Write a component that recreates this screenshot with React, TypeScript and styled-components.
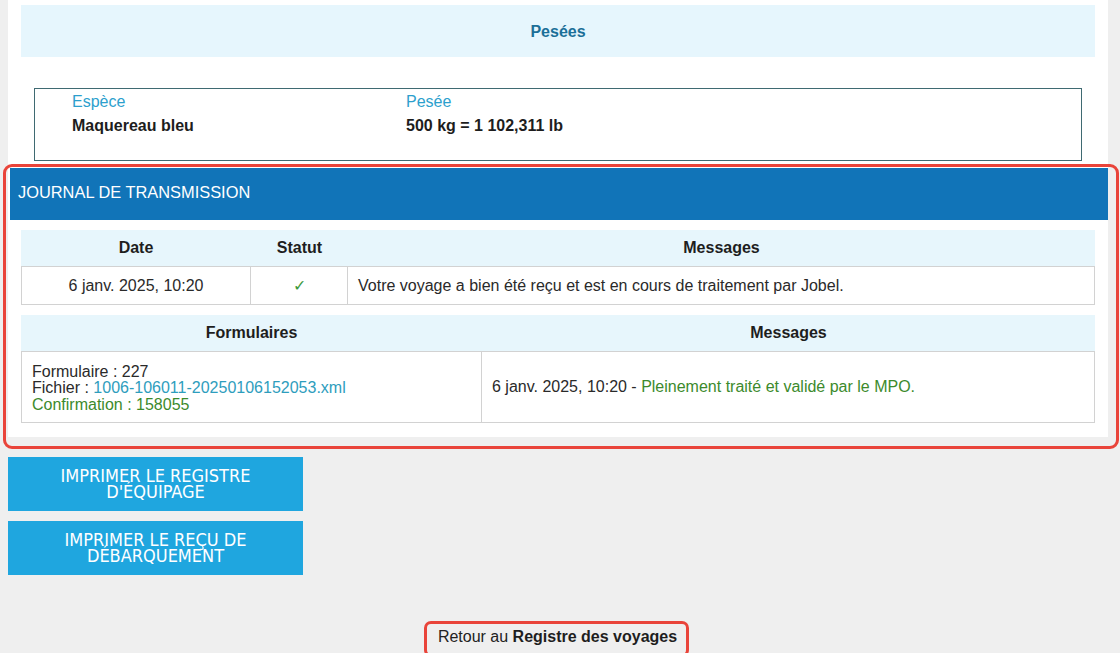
import React from 'react';
import styled, { createGlobalStyle } from 'styled-components';

const GlobalStyle = createGlobalStyle`
  html, body {
    margin: 0;
    padding: 0;
    background: #efefef;
    font-family: "Liberation Sans", Arial, sans-serif;
    color: #222;
  }
  body {
    overflow: hidden;
  }
`;

const Page = styled.div`
  width: 1120px;
  height: 653px;
  padding-left: 8px;
  box-sizing: border-box;
`;

const Card = styled.div`
  width: 1100px;
  background: #fff;
  padding-top: 5px;
`;

const SectionTitle = styled.div`
  margin: 0 13px;
  height: 52px;
  background: #e6f6fd;
  display: flex;
  align-items: center;
  justify-content: center;
  padding-top: 2px;
  box-sizing: border-box;
  font-size: 16px;
  font-weight: bold;
  color: #1b6f98;
`;

const SpeciesBox = styled.div`
  margin: 31px 26px 0 26px;
  height: 73px;
  box-sizing: border-box;
  border: 1px solid #3f6a72;
  display: grid;
  grid-template-columns: 334px 1fr;
  padding: 4px 0 0 37px;
`;

const Field = styled.div`
  display: flex;
  flex-direction: column;
`;

const FieldLabel = styled.span`
  font-size: 16px;
  color: #2c9fcd;
  line-height: 17px;
`;

const FieldValue = styled.span`
  font-size: 16px;
  font-weight: bold;
  color: #1d1d1d;
  line-height: 17px;
  margin-top: 7px;
`;

const Journal = styled.section`
  position: relative;
  margin-top: 7px;
  padding-bottom: 14px;
`;

const Highlight = styled.div<{ $radius?: number }>`
  position: absolute;
  border: 3px solid #e9443a;
  border-radius: ${p => p.$radius ?? 9}px;
  pointer-events: none;
`;

const JournalBar = styled.div`
  height: 52px;
  margin-left: 2px;
  background: #1174b8;
  color: #fff;
  font-size: 16.4px;
  display: flex;
  align-items: center;
  padding-left: 8px;
  padding-bottom: 3px;
  box-sizing: border-box;
`;

const Table = styled.div<{ $cols: string }>`
  margin: 10px 13px 0 13px;
  display: grid;
  grid-template-columns: ${p => p.$cols};
`;

const HeadCell = styled.div`
  height: 37px;
  background: #e7f6fc;
  display: flex;
  align-items: center;
  justify-content: center;
  font-size: 16px;
  font-weight: bold;
  color: #1e1e1e;
  border-bottom: 1px solid #d2d2d2;
  box-sizing: border-box;
`;

const Cell = styled.div<{ $center?: boolean; $h: number }>`
  height: ${p => p.$h}px;
  box-sizing: border-box;
  border: 1px solid #d2d2d2;
  border-top: none;
  border-left: none;
  display: flex;
  align-items: center;
  justify-content: ${p => (p.$center ? 'center' : 'flex-start')};
  padding: 0 10px;
  font-size: 16px;
  color: #2a2a2a;
`;

const FirstCell = styled(Cell)`
  border-left: 1px solid #d2d2d2;
`;

const Check = styled.span`
  color: #3d9a3d;
  font-size: 16px;
`;

const Lines = styled.div`
  display: flex;
  flex-direction: column;
  line-height: 16.5px;
  margin-top: 3px;
`;

const Link = styled.span`
  color: #2e9dbd;
`;

const Green = styled.span`
  color: #3c8a2c;
`;

const Buttons = styled.div`
  display: flex;
  flex-direction: column;
  gap: 10px;
  margin-top: 20px;
`;

const PrintButton = styled.button`
  width: 295px;
  height: 54px;
  border: none;
  background: #1fa6df;
  color: #fff;
  font-family: "Liberation Sans Narrow", "DejaVu Sans Condensed", sans-serif;
  font-size: 18px;
  line-height: 16px;
  text-transform: uppercase;
  padding: 0 40px 0 40px;
  cursor: pointer;
`;

const Footer = styled.div`
  display: flex;
  justify-content: center;
  margin-top: 46px;
  padding-right: 15px;
`;

const Back = styled.a`
  position: relative;
  font-size: 16px;
  color: #222;
  padding: 7px 12px 7px 14px;
`;

const Bold = styled.b`
  color: #1e1e1e;
`;

const App: React.FC = () => {
  return (
    <>
      <GlobalStyle />
      <Page>
        <Card>
          <SectionTitle>Pesées</SectionTitle>
          <SpeciesBox>
            <Field>
              <FieldLabel>Espèce</FieldLabel>
              <FieldValue>Maquereau bleu</FieldValue>
            </Field>
            <Field>
              <FieldLabel>Pesée</FieldLabel>
              <FieldValue>500 kg = 1 102,311 lb</FieldValue>
            </Field>
          </SpeciesBox>

          <Journal>
            <Highlight style={{ top: -4, bottom: -12, left: -5, right: -11 }} />
            <JournalBar>JOURNAL DE TRANSMISSION</JournalBar>

            <Table $cols="230px 97px 1fr">
              <HeadCell>Date</HeadCell>
              <HeadCell>Statut</HeadCell>
              <HeadCell>Messages</HeadCell>
              <FirstCell $h={38} $center>6 janv. 2025, 10:20</FirstCell>
              <Cell $h={38} $center>
                <Check>✓</Check>
              </Cell>
              <Cell $h={38}>Votre voyage a bien été reçu et est en cours de traitement par Jobel.</Cell>
            </Table>

            <Table $cols="461px 1fr">
              <HeadCell>Formulaires</HeadCell>
              <HeadCell>Messages</HeadCell>
              <FirstCell $h={71}>
                <Lines>
                  <span>Formulaire : 227</span>
                  <span>
                    Fichier : <Link>1006-106011-20250106152053.xml</Link>
                  </span>
                  <Green>Confirmation : 158055</Green>
                </Lines>
              </FirstCell>
              <Cell $h={71}>
                6 janv. 2025, 10:20 -&nbsp;<Green>Pleinement traité et validé par le MPO.</Green>
              </Cell>
            </Table>
          </Journal>
        </Card>

        <Buttons>
          <PrintButton>Imprimer le registre d'équipage</PrintButton>
          <PrintButton>Imprimer le reçu de débarquement</PrintButton>
        </Buttons>

        <Footer>
          <Back>
            <Highlight $radius={7} style={{ top: 0, bottom: -4, left: 0, right: 0 }} />
            Retour au <Bold>Registre des voyages</Bold>
          </Back>
        </Footer>
      </Page>
    </>
  );
};

export default App;
